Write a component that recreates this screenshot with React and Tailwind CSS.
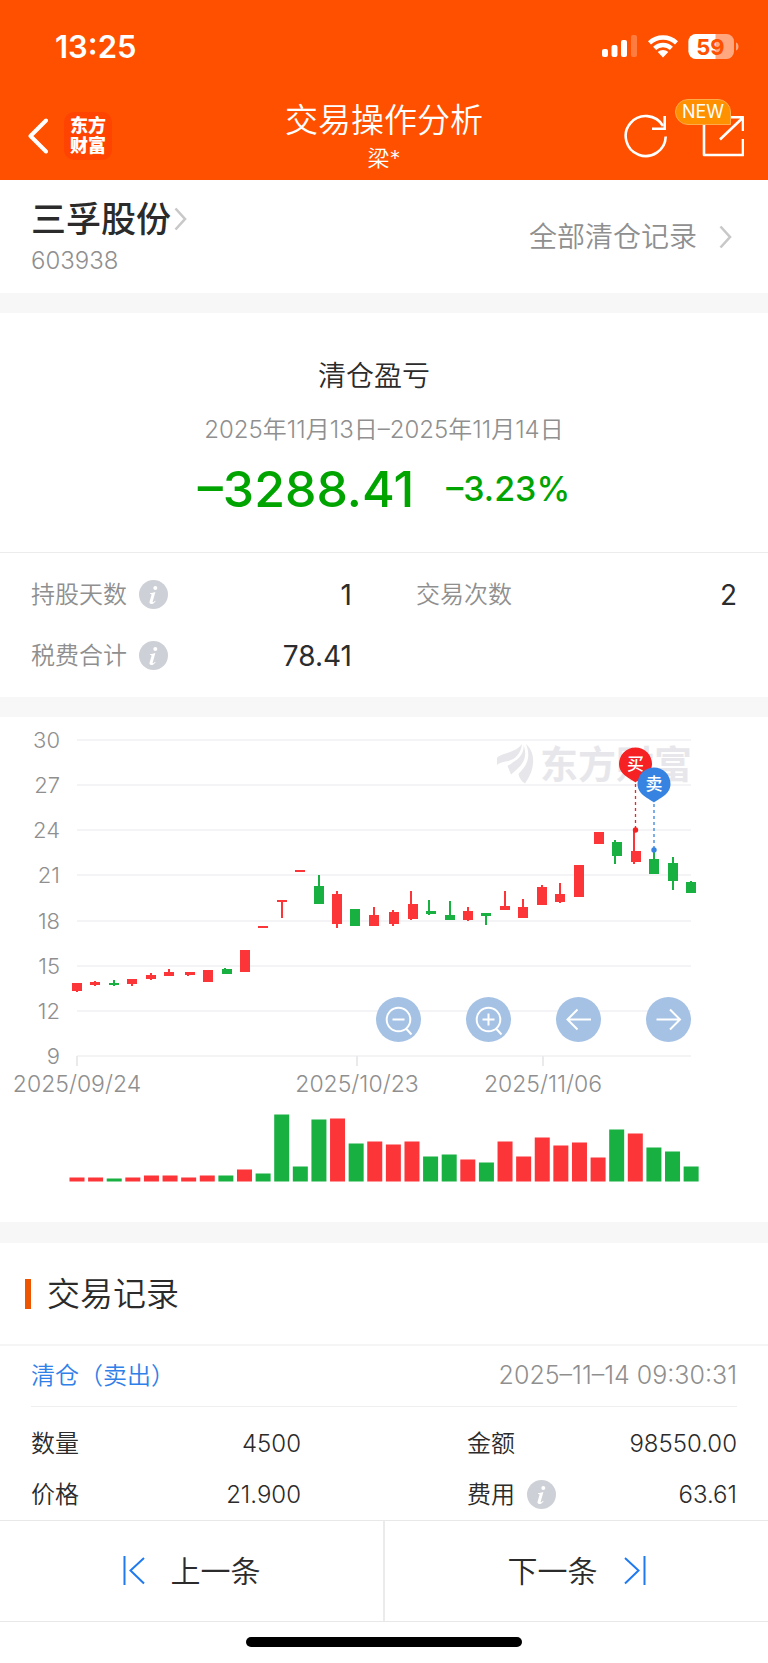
const UP = "#fc3538";
const DOWN = "#19b042";

// x, high, body top, body bottom, low, wick x, colour (y in chart units)
const candles = [
  [77, 266, 266, 274, 275, 77, UP],
  [95, 264, 265, 268, 269, 95, UP],
  [114, 263, 266, 268, 269, 114, DOWN],
  [132, 262, 262, 267, 269, 132, UP],
  [151, 256, 258, 262, 263, 151, UP],
  [169, 252, 255, 259, 259, 169, UP],
  [190, 255, 255, 258, 259, 188, UP],
  [208, 253, 253, 265, 265, 208, UP],
  [227, 251, 252, 257, 257, 225, DOWN],
  [245, 233, 233, 255, 255, 245, UP],
  [263, 209, 209, 211, 211, 263, UP],
  [282, 183, 183, 185, 201, 282, UP],
  [300, 153, 153, 155, 155, 300, UP],
  [319, 158, 169, 187, 187, 319, DOWN],
  [337, 174, 177, 207, 211, 337, UP],
  [355, 192, 192, 209, 209, 355, DOWN],
  [374, 190, 198, 209, 209, 374, UP],
  [394, 193, 195, 207, 209, 393, UP],
  [413, 174, 187, 202, 203, 411, UP],
  [431, 183, 194, 197, 198, 429, DOWN],
  [450, 184, 198, 203, 203, 450, DOWN],
  [468, 190, 194, 203, 204, 468, UP],
  [486, 196, 196, 199, 208, 486, DOWN],
  [505, 174, 189, 193, 193, 505, UP],
  [523, 182, 190, 201, 201, 523, UP],
  [542, 168, 170, 188, 188, 542, UP],
  [560, 166, 177, 185, 186, 560, UP],
  [579, 148, 148, 180, 180, 579, UP],
  [599, 115, 115, 127, 127, 599, UP],
  [617, 123, 125, 139, 147, 615, DOWN],
  [636, 114, 134, 145, 147, 634, UP],
  [654, 134, 142, 157, 157, 654, DOWN],
  [673, 140, 146, 164, 173, 673, DOWN],
  [691, 164, 165, 176, 176, 691, DOWN],
];

const volumes = [
  [4, UP], [4, UP], [3, DOWN], [4, UP], [6, UP], [6, UP], [4, UP], [6, UP], [6, DOWN],
  [12, UP], [8, DOWN], [67, DOWN], [15, DOWN], [62, DOWN], [63, UP], [38, DOWN], [40, UP],
  [37, UP], [40, UP], [25, DOWN], [27, DOWN], [22, UP], [19, DOWN], [40, UP], [25, UP],
  [44, UP], [36, UP], [39, UP], [24, UP], [52, DOWN], [48, UP], [34, DOWN], [30, DOWN],
  [15, DOWN],
];

const grid = [
  [30, 23], [27, 68], [24, 113], [21, 158], [18, 204], [15, 249], [12, 294], [9, 339],
];
const dates = [["2025/09/24", 77], ["2025/10/23", 357], ["2025/11/06", 543]];

function StatusIcons() {
  return (
    <svg width="140" height="28" viewBox="0 0 140 28" aria-hidden="true">
      <g fill="#fff">
        <rect x="2" y="16" width="6" height="8" rx="2" />
        <rect x="11.500" y="12" width="6" height="12" rx="2" />
        <rect x="21" y="7" width="6" height="17" rx="2" />
        <rect x="31" y="2" width="6" height="22" rx="2" opacity="0.25" />
      </g>
      <g fill="none" stroke="#fff" strokeWidth="4.400">
        <path d="M49.500 9.800A20 20 0 0 1 76.500 9.800" />
        <path d="M54.600 15.400A12.200 12.200 0 0 1 71.400 15.400" />
      </g>
      <path d="M63 24.500l-5.300-5.400a7.600 7.600 0 0 1 10.600 0z" fill="#fff" />
      <clipPath id="battery"><rect x="88.500" y="1" width="45.500" height="25" rx="7.500" /></clipPath>
      <g clipPath="url(#battery)">
        <rect x="88" y="1" width="46" height="25" fill="#fff" opacity="0.5" />
        <rect x="88" y="1" width="27.500" height="25" fill="#fff" />
      </g>
      <path d="M136 9.500c3.300 1 3.300 7 0 8z" fill="#fff" opacity="0.500" />
      <text x="110.500" y="21.500" textAnchor="middle" fontSize="22" fontWeight="700" fill="#ff5000">59</text>
    </svg>
  );
}

function Chevron() {
  return (
    <svg width="13" height="24" viewBox="0 0 13 24" fill="none" stroke="#c8c8c8" strokeWidth="2.600" aria-hidden="true">
      <path d="M1.500 1.500L11 12 1.500 22.500" />
    </svg>
  );
}

function Info({ label }) {
  return (
    <button type="button" aria-label={label} className="ml-3 block">
      <svg width="29" height="29" viewBox="0 0 29 29">
        <circle cx="14.500" cy="14.500" r="14.500" fill="#cdd0d6" />
        <circle cx="16.300" cy="8" r="2" fill="#fff" />
        <path d="M11 13.200c1.800-.2 3.500-.8 5.400-1.200l-2.700 9.600c-.2.900.6.900 2.300-.9l.6.500c-1.500 2-2.900 2.900-4.300 2.900-1.500 0-2.100-1-1.700-2.500l1.900-6.600c.2-.8-.3-1-1.600-1z" fill="#fff" />
      </svg>
    </button>
  );
}

function Stat({ label, value, info }) {
  return (
    <div className="flex h-[61px] items-center">
      <dt className="flex items-center text-2xl font-[350] text-[#8f8f8f]">
        {label}
        {info && <Info label={label + "说明"} />}
      </dt>
      <dd className="ml-auto text-[28px] text-[#2b2c2e]">{value}</dd>
    </div>
  );
}

function Detail({ label, value, info }) {
  return (
    <div className="flex h-[51px] items-center text-2xl font-[350] text-[#2b2b2b]">
      <dt className="flex items-center">
        {label}
        {info && <Info label={label + "说明"} />}
      </dt>
      <dd className="ml-auto">{value}</dd>
    </div>
  );
}

function Pin({ x, y, end, color, label }) {
  return (
    <g>
      <path d={`M${x} ${y + 20}V${end}`} stroke={color} strokeWidth="1.300" strokeDasharray="3 3" />
      <circle cx={x} cy={end} r="2.700" fill={color} />
      <path d={`M${x} ${y + 18.500}C${x - 4} ${y + 15} ${x - 16.500} ${y + 11} ${x - 16.500} ${y}a16.500 16.500 0 0 1 33 0C${x + 16.500} ${y + 11} ${x + 4} ${y + 15} ${x} ${y + 18.500}z`} fill={color} />
      <text x={x} y={y + 6} textAnchor="middle" fontSize="17" fontWeight="500" fill="#fff">{label}</text>
    </g>
  );
}

function Chart() {
  return (
    <svg className="block w-full" viewBox="0 0 768 505" role="img" aria-label="三孚股份日K线与成交量">
      <g fill="#e7e7eb">
        <path d="M497 41C500 36 516 36 522 27C521 37 515 42 508.500 44C503 45 499 46 497 48z" />
        <path d="M523.500 28C525 40 513 45 507.500 49L511 57.500C520 50 529 43 523.500 28z" />
        <path d="M526 27C536 36 535.500 52 525 66.500C521 64 519 60 518.500 57C525 50 532 42 526 27z" />
        <text x="616" y="61" textAnchor="middle" fontSize="38" fontWeight="700">东方财富</text>
      </g>
      <g stroke="#f4f4f6" strokeWidth="2">
        {grid.map(([v, y]) => <path key={v} d={`M77 ${y}H691`} />)}
        {dates.map(([d, x]) => <path key={d} d={`M${x} 339v10`} stroke="#eaeaec" />)}
      </g>
      <g fill="#8f8f8f" fontSize="22" fontWeight="350">
        {grid.map(([v, y]) => <text key={v} x="60" y={y + 8} textAnchor="end">{v}</text>)}
        {dates.map(([d, x]) => <text key={d} x={x} y="375" textAnchor="middle" fontSize="23">{d}</text>)}
      </g>
      {candles.map(([x, high, top, bottom, low, wick, color]) => (
        <g key={x} fill={color}>
          <rect x={wick - 1} y={high} width="2" height={low - high} />
          <rect x={x - 5} y={top} width="10" height={bottom - top} />
        </g>
      ))}
      {volumes.map(([h, color], i) => (
        <rect key={i} x={69.500 + i * 18.610} y={464.500 - h} width="15" height={h} fill={color} />
      ))}
      <Pin x={635.500} y={47} end={113} color="#f52123" label="买" />
      <Pin x={654} y={67} end={133} color="#3683e2" label="卖" />
    </svg>
  );
}

const lens = "M34.300 22.500a11.800 11.800 0 1 1-23.600 0 11.800 11.800 0 0 1 23.600 0M30 31.500l5.500 6";
const tools = [
  ["缩小", lens + "M16.500 22.500h12"],
  ["放大", lens + "M16.500 22.500h12M22.500 16.500v12"],
  ["左移", "M35 22.500H11.500M21.500 12.500l-10 10 10 10"],
  ["右移", "M10.500 22.500H34M24 12.500l10 10-10 10"],
];

export default function App() {
  return (
    <div className="bg-white font-['Inter','Noto_Sans_CJK_SC',sans-serif] text-[#2b2b2b]">
      <header className="bg-[#ff5000] text-white">
        <div className="flex h-[94px] items-center justify-between pl-[55px] pr-7">
          <time className="text-[31px] leading-9 font-semibold">13:25</time>
          <StatusIcons />
        </div>
        <div className="grid h-[86px] grid-cols-[1fr_auto_1fr] items-center pb-[3px] pl-7 pr-6">
          <div className="flex items-center gap-4">
            <button type="button" aria-label="返回">
              <svg width="20" height="36" viewBox="0 0 20 36" fill="none" stroke="#fff" strokeWidth="4" strokeLinecap="round" strokeLinejoin="round">
                <path d="M18 2.500L2.500 18 18 33.500" />
              </svg>
            </button>
            <a href="#home" className="flex size-12 items-center justify-center rounded-[10px] bg-[#ff4300] text-center text-lg leading-5 font-black">
              东方<br />财富
            </a>
          </div>
          <div className="pt-1 pr-1 text-center font-[350]">
            <h1 className="text-[33px] leading-10">交易操作分析</h1>
            <p className="text-[22px] leading-9">梁*</p>
          </div>
          <div className="flex items-center justify-end gap-[34px]">
            <button type="button" aria-label="刷新">
              <svg width="44" height="44" viewBox="0 0 44 44" fill="none" stroke="#fff" strokeWidth="2.600">
                <path d="M41.700 22.500A20 20 0 1 1 39 12" />
                <path d="M40.700 2v12.700H28" />
              </svg>
            </button>
            <button type="button" aria-label="分享" className="relative">
              <svg width="42" height="42" viewBox="0 0 42 42" fill="none" stroke="#fff" strokeWidth="2.600" strokeLinejoin="round">
                <path d="M2 2v38h39V24" />
                <path d="M24 2.300h17V16M40.500 3L18 24.500" />
              </svg>
              <span className="absolute -top-4 right-[13px] rounded-full rounded-br-none border border-[#ffab4a] bg-[#ff9000] px-[6px] text-lg leading-6">NEW</span>
            </button>
          </div>
        </div>
      </header>

      <section className="flex h-[113px] items-center justify-between pr-9 pl-[31px]">
        <div className="pt-[3px]">
          <a href="#stock" className="flex items-center gap-[3px] text-[35px] leading-[45px] font-medium">
            三孚股份
            <Chevron />
          </a>
          <p className="text-2xl leading-[38px] font-[350] text-[#8f8f8f]">603938</p>
        </div>
        <a href="#records" className="flex items-center gap-[22px] text-[28px] font-[350] leading-10 text-[#8f8f8f]">
          全部清仓记录
          <Chevron />
        </a>
      </section>

      <section className="border-t-20 border-[#f7f7f7]">
        <div className="flex h-[239px] flex-col items-center pt-[41px]">
          <h2 className="pr-5 text-[28px] leading-[44px] font-[350]">清仓盈亏</h2>
          <p className="mt-3 text-2xl leading-10 font-[350] text-[#8f8f8f]">2025年11月13日–2025年11月14日</p>
          <p className="mt-[7px] flex items-center gap-8 font-medium leading-[64px] text-[#00a400]">
            <span className="text-[50px]">–3288.41</span>
            <span className="text-[34px]">–3.23%</span>
          </p>
        </div>
        <dl className="grid grid-cols-2 gap-x-16 border-t border-[#ececec] px-[31px] py-[11px]">
          <Stat label="持股天数" value="1" info />
          <Stat label="交易次数" value="2" />
          <Stat label="税费合计" value="78.41" info />
        </dl>
      </section>

      <section className="relative border-t-20 border-[#f7f7f7]">
        <Chart />
        <div className="absolute top-[280px] right-[77px] flex gap-[45px]">
          {tools.map(([name, d]) => (
            <button key={name} type="button" aria-label={name} className="size-[45px] rounded-full bg-[#a0bfe3]/95">
              <svg width="45" height="45" viewBox="0 0 45 45" fill="none" stroke="#fff" strokeWidth="2">
                <path d={d} />
              </svg>
            </button>
          ))}
        </div>
      </section>

      <section className="border-t-[21px] border-[#f7f7f7]">
        <div className="flex h-[101px] items-center gap-4 pl-[25px]">
          <span className="h-[30px] w-[6px] bg-[#ee5500]" />
          <h2 className="text-[33px] leading-10 font-[350]">交易记录</h2>
        </div>
        <article className="border-t-2 border-[#f5f5f5] px-[31px]">
          <div className="flex h-[61px] items-center justify-between border-b border-[#efefef] font-[350]">
            <h3 className="text-2xl text-[#2f80e8]">清仓（卖出）</h3>
            <time className="text-[25px] text-[#8f8f8f]">2025–11–14 09:30:31</time>
          </div>
          <dl className="grid grid-cols-2 gap-x-[166px] pt-[11px]">
            <Detail label="数量" value="4500" />
            <Detail label="金额" value="98550.00" />
            <Detail label="价格" value="21.900" />
            <Detail label="费用" value="63.61" info />
          </dl>
        </article>
      </section>

      <nav className="grid grid-cols-2 border-y border-[#e8e8e8] text-[30px] font-[350]">
        <button type="button" className="flex h-[100px] items-center justify-center gap-[26px] border-r border-[#ebebeb]">
          <svg width="22" height="30" viewBox="0 0 22 30" fill="none" stroke="#1f7af0" strokeWidth="2">
            <path d="M1.500 0v29M21 2L7.500 14.500 21 27.500" />
          </svg>
          上一条
        </button>
        <button type="button" className="flex h-[100px] items-center justify-center gap-[26px] border-l border-[#ebebeb]">
          下一条
          <svg width="22" height="30" viewBox="0 0 22 30" fill="none" stroke="#1f7af0" strokeWidth="2">
            <path d="M20.500 0v29M1 2l13.500 12.500L1 27.500" />
          </svg>
        </button>
      </nav>
      <div className="flex h-10 items-center justify-center">
        <span className="h-[10px] w-[36%] rounded-full bg-black" />
      </div>
    </div>
  );
}
